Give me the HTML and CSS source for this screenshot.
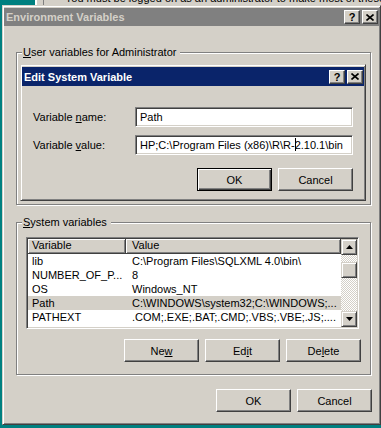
FILE: index.html
```html
<!DOCTYPE html>
<html lang="en">
<head>
    <meta charset="UTF-8">
    <title>Environment Variables</title>
    <link rel="stylesheet" href="styles.css">
</head>
<body>
    <div class="behind">
        <div class="behind-win">
            <div class="behind-inner">
                <div class="behind-text">You must be logged on as an administrator to make most of these changes.</div>
            </div>
        </div>
    </div>

    <div class="window">
        <div class="titlebar inactive">
            <span class="title">Environment Variables</span>
            <div class="caption-btns">
                <span class="cap-btn">?</span>
                <span class="cap-btn">
                    <svg width="8" height="7" viewBox="0 0 8 7"><path d="M0.5 0.5 L7.5 6.5 M7.5 0.5 L0.5 6.5" stroke="#000" stroke-width="1.6" fill="none"/></svg>
                </span>
            </div>
        </div>

        <div class="window-body">
            <div class="group user-group">
                <span class="group-label"><u>U</u>ser variables for Administrator</span>

                <div class="dialog">
                    <div class="titlebar active">
                        <span class="title">Edit System Variable</span>
                        <div class="caption-btns">
                            <span class="cap-btn">?</span>
                            <span class="cap-btn">
                                <svg width="8" height="7" viewBox="0 0 8 7"><path d="M0.5 0.5 L7.5 6.5 M7.5 0.5 L0.5 6.5" stroke="#000" stroke-width="1.6" fill="none"/></svg>
                            </span>
                        </div>
                    </div>
                    <div class="dialog-body">
                        <div class="field-row">
                            <span class="field-label">Variable <u>n</u>ame:</span>
                            <div class="field">Path</div>
                        </div>
                        <div class="field-row">
                            <span class="field-label">Variable <u>v</u>alue:</span>
                            <div class="field">HP;C:\Program Files (x86)\R\R-<span class="caret"></span>2.10.1\bin</div>
                        </div>
                        <div class="btn-row">
                            <button class="btn default">OK</button>
                            <button class="btn">Cancel</button>
                        </div>
                    </div>
                </div>
            </div>

            <div class="group sys-group">
                <span class="group-label"><u>S</u>ystem variables</span>
                <div class="list">
                    <div class="list-main">
                        <div class="list-head">
                            <div class="head-cell c1">Variable</div>
                            <div class="head-cell c2">Value</div>
                        </div>
                        <div class="row"><span class="c1">lib</span><span class="c2">C:\Program Files\SQLXML 4.0\bin\</span></div>
                        <div class="row"><span class="c1">NUMBER_OF_P...</span><span class="c2">8</span></div>
                        <div class="row"><span class="c1">OS</span><span class="c2">Windows_NT</span></div>
                        <div class="row selected"><span class="c1">Path</span><span class="c2">C:\WINDOWS\system32;C:\WINDOWS;...</span></div>
                        <div class="row"><span class="c1">PATHEXT</span><span class="c2">.COM;.EXE;.BAT;.CMD;.VBS;.VBE;.JS;....</span></div>
                        <div class="row"><span class="c1">PROCESSOR_A...</span><span class="c2">x86</span></div>
                    </div>
                    <div class="scrollbar">
                        <div class="sb-btn">
                            <svg width="7" height="4" viewBox="0 0 7 4"><path d="M3.5 0 L7 4 L0 4 Z" fill="#000"/></svg>
                        </div>
                        <div class="sb-track sb-track-top"></div>
                        <div class="sb-btn sb-thumb"></div>
                        <div class="sb-track sb-track-rest"></div>
                        <div class="sb-btn">
                            <svg width="7" height="4" viewBox="0 0 7 4"><path d="M0 0 L7 0 L3.5 4 Z" fill="#000"/></svg>
                        </div>
                    </div>
                </div>
                <div class="btn-row sys-btns">
                    <button class="btn">Ne<u>w</u></button>
                    <button class="btn">Ed<u>i</u>t</button>
                    <button class="btn">De<u>l</u>ete</button>
                </div>
            </div>

            <div class="btn-row actions">
                <button class="btn">OK</button>
                <button class="btn">Cancel</button>
            </div>
        </div>
    </div>
</body>
</html>
```

FILE: styles.css
```css
body {
    margin: 0;
    width: 381px;
    height: 428px;
    overflow: hidden;
    background: #008080;
    font-family: "Liberation Sans", Arial, sans-serif;
    font-size: 11px;
    color: #000;
}

/* window peeking out behind */
.behind {
    height: 5px;
    padding-left: 35px;
}
.behind-win {
    height: 5px;
    background: #d4d0c8;
    border-left: 2px solid #fff;
    padding-left: 6px;
    overflow: hidden;
}
.behind-inner {
    height: 5px;
    border-left: 1px solid #808080;
    padding-left: 21px;
    overflow: hidden;
}
.behind-text {
    margin-top: -8px;
    line-height: 13px;
    white-space: nowrap;
}

/* frames */
.window {
    box-sizing: border-box;
    width: 379px;
    height: 420px;
    margin-left: 2px;
    background: #d4d0c8;
    border: 1px solid;
    border-color: #d4d0c8 #404040 #404040 #d4d0c8;
    box-shadow: inset 1px 1px #fff, inset -1px -1px #808080;
    padding: 2px 1px 0 1px;
}
.titlebar {
    height: 18px;
    display: flex;
    align-items: center;
    justify-content: space-between;
    padding: 0 1px 0 2px;
}
.titlebar.inactive {
    background: #808080;
    color: #d4d0c8;
}
.titlebar.active {
    background: #0a246a;
    color: #fff;
}
.title {
    font-weight: bold;
}
.caption-btns {
    display: flex;
    gap: 2px;
}
.cap-btn {
    box-sizing: border-box;
    width: 16px;
    height: 14px;
    display: flex;
    align-items: center;
    justify-content: center;
    background: #d4d0c8;
    border: 1px solid;
    border-color: #fff #404040 #404040 #fff;
    box-shadow: inset -1px -1px #808080;
    color: #000;
    font-weight: bold;
    line-height: 12px;
}

.window-body {
    padding: 26px 7px 0 12px;
}

/* group boxes */
.group {
    position: relative;
    box-sizing: border-box;
    width: 355px;
    height: 153px;
    border: 1px solid #808080;
    box-shadow: inset 1px 1px #fff, 1px 1px #fff;
}
.group-label {
    position: absolute;
    top: -7px;
    left: 5px;
    padding: 0 4px 0 1px;
    background: #d4d0c8;
    line-height: 13px;
}
.sys-group {
    margin-top: 17px;
    padding: 14px 9px 0 9px;
}

/* edit dialog on top */
.dialog {
    position: absolute;
    left: 3px;
    top: 11px;
    box-sizing: border-box;
    width: 346px;
    height: 137px;
    background: #d4d0c8;
    border: 1px solid;
    border-color: #d4d0c8 #404040 #404040 #d4d0c8;
    box-shadow: inset 1px 1px #fff, inset -1px -1px #808080;
    padding: 2px 1px 0 1px;
}
.dialog .titlebar {
    height: 19px;
}
.dialog-body {
    padding: 21px 11px 0 11px;
}
.field-row {
    display: flex;
    align-items: center;
}
.field-row + .field-row {
    margin-top: 8px;
}
.field-label {
    width: 102px;
}
.field {
    box-sizing: border-box;
    width: 218px;
    height: 20px;
    padding: 0 4px;
    background: #fff;
    border: 1px solid;
    border-color: #808080 #fff #fff #808080;
    box-shadow: inset 1px 1px #404040, inset -1px -1px #d4d0c8;
    line-height: 18px;
    white-space: nowrap;
    overflow: hidden;
}
.caret {
    display: inline-block;
    width: 1px;
    height: 13px;
    margin-right: -1px;
    background: #000;
    vertical-align: -2px;
}

/* buttons */
.btn-row {
    display: flex;
    justify-content: flex-end;
    gap: 6px;
}
.dialog .btn-row {
    margin-top: 13px;
}
.sys-btns {
    margin-top: 10px;
}
.actions {
    margin-top: 14px;
}
.btn {
    box-sizing: border-box;
    width: 75px;
    height: 23px;
    padding: 0;
    font: inherit;
    color: #000;
    background: #d4d0c8;
    border: 1px solid;
    border-color: #fff #404040 #404040 #fff;
    box-shadow: inset -1px -1px #808080;
}
.btn.default {
    border-color: #000;
    box-shadow: inset 1px 1px #fff, inset -1px -1px #404040, inset -2px -2px #808080;
}

/* list view */
.list {
    box-sizing: border-box;
    width: 333px;
    height: 92px;
    display: flex;
    padding: 1px;
    background: #fff;
    border: 1px solid;
    border-color: #808080 #fff #fff #808080;
    box-shadow: inset 1px 1px #404040, inset -1px -1px #d4d0c8;
}
.list-main {
    flex: 1;
    overflow: hidden;
}
.list-head {
    display: flex;
    height: 15px;
}
.head-cell {
    box-sizing: border-box;
    height: 15px;
    background: #d4d0c8;
    border-right: 1px solid #404040;
    border-bottom: 1px solid #404040;
    box-shadow: inset 1px 1px #fff, inset -1px -1px #808080;
    line-height: 13px;
}
.c1 {
    box-sizing: border-box;
    width: 98px;
    flex: none;
    padding-left: 4px;
}
.c2 {
    flex: 1;
    padding-left: 6px;
}
.row {
    display: flex;
    height: 14px;
    line-height: 14px;
    white-space: nowrap;
}
.row.selected {
    background: #d4d0c8;
}

.scrollbar {
    width: 16px;
    display: flex;
    flex-direction: column;
}
.sb-btn {
    box-sizing: border-box;
    width: 16px;
    height: 16px;
    flex: none;
    display: flex;
    align-items: center;
    justify-content: center;
    background: #d4d0c8;
    border: 1px solid;
    border-color: #d4d0c8 #404040 #404040 #d4d0c8;
    box-shadow: inset 1px 1px #fff, inset -1px -1px #808080;
}
.sb-track {
    background: repeating-conic-gradient(#d4d0c8 0 25%, #fff 0 50%) 0 0 / 2px 2px;
}
.sb-track-top {
    height: 7px;
}
.sb-track-rest {
    flex: 1;
}
```
